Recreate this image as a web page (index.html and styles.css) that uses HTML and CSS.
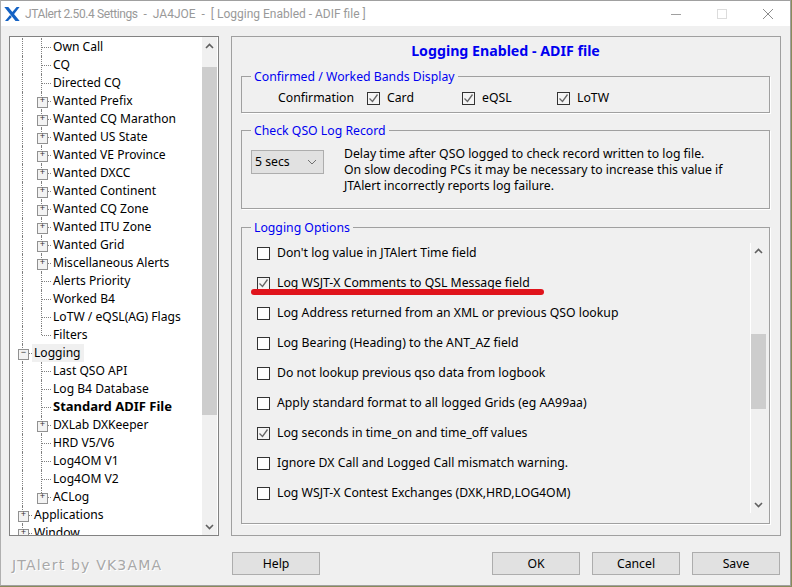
FILE: index.html
```html
<!DOCTYPE html>
<html lang="en">
<head>
<meta charset="utf-8">
<title>JTAlert Settings</title>
<link rel="stylesheet" href="styles.css">
</head>
<body>
<div class="window">
  <header class="titlebar">
    <svg class="logo" width="16" height="16" viewBox="0 0 16 16"><path d="M.3 1h4L15.7 15h-4.2zM15.6 1L9.6 8.8 7.9 6.6 12.6 1zM6 8.9L7.8 11.1 4 15H1z" fill="#1462c4"/></svg>
    <span class="title"><span class="title-app">JTAlert 2.50.4 Settings</span>&nbsp; -&nbsp; JA4JOE&nbsp; -&nbsp; [ Logging Enabled - ADIF file ]</span>
    <div class="winctl">
      <svg width="12" height="12" viewBox="0 0 12 12"><path d="M1 6.5h10" stroke="#a0a0a0"/></svg>
      <svg width="12" height="12" viewBox="0 0 12 12"><rect x="1.5" y="1.5" width="9" height="9" fill="none" stroke="#dcdcdc"/></svg>
      <svg width="12" height="12" viewBox="0 0 12 12"><path d="M1 1l10 10M11 1L1 11" stroke="#8c8c8c" fill="none"/></svg>
    </div>
  </header>
  <main class="content">
    <nav class="tree">
      <div class="tree-list">
        <div class="row"><i class="g"></i><i class="g"></i><i class="stub"></i><span>Own Call</span></div>
        <div class="row"><i class="g"></i><i class="g"></i><i class="stub"></i><span>CQ</span></div>
        <div class="row"><i class="g"></i><i class="g"></i><i class="stub"></i><span>Directed CQ</span></div>
        <div class="row"><i class="g"></i><i class="g plus"></i><i class="stub"></i><span>Wanted Prefix</span></div>
        <div class="row"><i class="g"></i><i class="g plus"></i><i class="stub"></i><span>Wanted CQ Marathon</span></div>
        <div class="row"><i class="g"></i><i class="g plus"></i><i class="stub"></i><span>Wanted US State</span></div>
        <div class="row"><i class="g"></i><i class="g plus"></i><i class="stub"></i><span>Wanted VE Province</span></div>
        <div class="row"><i class="g"></i><i class="g plus"></i><i class="stub"></i><span>Wanted DXCC</span></div>
        <div class="row"><i class="g"></i><i class="g plus"></i><i class="stub"></i><span>Wanted Continent</span></div>
        <div class="row"><i class="g"></i><i class="g plus"></i><i class="stub"></i><span>Wanted CQ Zone</span></div>
        <div class="row"><i class="g"></i><i class="g plus"></i><i class="stub"></i><span>Wanted ITU Zone</span></div>
        <div class="row"><i class="g"></i><i class="g plus"></i><i class="stub"></i><span>Wanted Grid</span></div>
        <div class="row"><i class="g"></i><i class="g plus"></i><i class="stub"></i><span>Miscellaneous Alerts</span></div>
        <div class="row"><i class="g"></i><i class="g"></i><i class="stub"></i><span>Alerts Priority</span></div>
        <div class="row"><i class="g"></i><i class="g"></i><i class="stub"></i><span>Worked B4</span></div>
        <div class="row"><i class="g"></i><i class="g"></i><i class="stub"></i><span>LoTW / eQSL(AG) Flags</span></div>
        <div class="row"><i class="g"></i><i class="g end"></i><i class="stub"></i><span>Filters</span></div>
        <div class="row"><i class="g minus"></i><i class="stub"></i><span class="selected">Logging</span></div>
        <div class="row"><i class="g"></i><i class="g"></i><i class="stub"></i><span>Last QSO API</span></div>
        <div class="row"><i class="g"></i><i class="g"></i><i class="stub"></i><span>Log B4 Database</span></div>
        <div class="row"><i class="g"></i><i class="g"></i><i class="stub"></i><span class="strong">Standard ADIF File</span></div>
        <div class="row"><i class="g"></i><i class="g plus"></i><i class="stub"></i><span>DXLab DXKeeper</span></div>
        <div class="row"><i class="g"></i><i class="g"></i><i class="stub"></i><span>HRD V5/V6</span></div>
        <div class="row"><i class="g"></i><i class="g"></i><i class="stub"></i><span>Log4OM V1</span></div>
        <div class="row"><i class="g"></i><i class="g"></i><i class="stub"></i><span>Log4OM V2</span></div>
        <div class="row"><i class="g"></i><i class="g plus end"></i><i class="stub"></i><span>ACLog</span></div>
        <div class="row"><i class="g plus"></i><i class="stub"></i><span>Applications</span></div>
        <div class="row"><i class="g plus"></i><i class="stub"></i><span>Window</span></div>
      </div>
      <div class="vscroll tree-scroll">
        <svg class="chev" width="9" height="6" viewBox="0 0 9 6"><path d="M1 5l3.5-3.5L8 5" fill="none" stroke="#606060" stroke-width="1.6"/></svg>
        <div class="track"><div class="thumb tree-thumb"></div></div>
        <svg class="chev" width="9" height="6" viewBox="0 0 9 6"><path d="M1 1l3.5 3.5L8 1" fill="none" stroke="#606060" stroke-width="1.6"/></svg>
      </div>
    </nav>
    <section class="panel">
      <h1 class="panel-title">Logging Enabled - ADIF file</h1>

      <fieldset class="group group-bands">
        <legend>Confirmed / Worked Bands Display</legend>
        <div class="bands">
          <span class="bands-label">Confirmation</span>
          <label class="check band-card"><i class="box on"><svg width="11" height="11" viewBox="0 0 11 11"><path d="M1.5 5.5l3 3 5-7" fill="none" stroke="#666" stroke-width="1.3"/></svg></i>Card</label>
          <label class="check band-eqsl"><i class="box on"><svg width="11" height="11" viewBox="0 0 11 11"><path d="M1.5 5.5l3 3 5-7" fill="none" stroke="#666" stroke-width="1.3"/></svg></i>eQSL</label>
          <label class="check"><i class="box on"><svg width="11" height="11" viewBox="0 0 11 11"><path d="M1.5 5.5l3 3 5-7" fill="none" stroke="#666" stroke-width="1.3"/></svg></i>LoTW</label>
        </div>
      </fieldset>

      <fieldset class="group group-check">
        <legend>Check QSO Log Record</legend>
        <div class="delay">
          <div class="combo"><span>5 secs</span><svg width="10" height="6" viewBox="0 0 10 6"><path d="M1 1l4 4 4-4" fill="none" stroke="#707070"/></svg></div>
          <p class="delay-text">Delay time after QSO logged to check record written to log file.<br>On slow decoding PCs it may be necessary to increase this value if<br>JTAlert incorrectly reports log failure.</p>
        </div>
      </fieldset>

      <fieldset class="group group-options">
        <legend>Logging Options</legend>
        <div class="options">
          <div class="option-list">
            <label class="check"><i class="box"></i>Don't log value in JTAlert Time field</label>
            <label class="check"><i class="box on"><svg width="11" height="11" viewBox="0 0 11 11"><path d="M1.5 5.5l3 3 5-7" fill="none" stroke="#666" stroke-width="1.3"/></svg></i>Log WSJT-X Comments to QSL Message field</label>
            <label class="check"><i class="box"></i>Log Address returned from an XML or previous QSO lookup</label>
            <label class="check"><i class="box"></i>Log Bearing (Heading) to the ANT_AZ field</label>
            <label class="check"><i class="box"></i>Do not lookup previous qso data from logbook</label>
            <label class="check"><i class="box"></i>Apply standard format to all logged Grids (eg AA99aa)</label>
            <label class="check"><i class="box on"><svg width="11" height="11" viewBox="0 0 11 11"><path d="M1.5 5.5l3 3 5-7" fill="none" stroke="#666" stroke-width="1.3"/></svg></i>Log seconds in time_on and time_off values</label>
            <label class="check"><i class="box"></i>Ignore DX Call and Logged Call mismatch warning.</label>
            <label class="check"><i class="box"></i>Log WSJT-X Contest Exchanges (DXK,HRD,LOG4OM)</label>
          </div>
          <div class="vscroll opt-scroll">
            <svg class="chev" width="9" height="6" viewBox="0 0 9 6"><path d="M1 5l3.5-3.5L8 5" fill="none" stroke="#606060" stroke-width="1.6"/></svg>
            <div class="track"><div class="thumb opt-thumb"></div></div>
            <svg class="chev" width="9" height="6" viewBox="0 0 9 6"><path d="M1 1l3.5 3.5L8 1" fill="none" stroke="#606060" stroke-width="1.6"/></svg>
          </div>
        </div>
        <div class="underline"></div>
      </fieldset>
    </section>
  </main>
  <footer class="footer">
    <span class="credit">JTAlert by VK3AMA</span>
    <button class="btn btn-help">Help</button>
    <span class="spacer"></span>
    <button class="btn">OK</button>
    <button class="btn">Cancel</button>
    <button class="btn btn-save">Save</button>
  </footer>
</div>
</body>
</html>
```
FILE: styles.css
```css
* { box-sizing: border-box; }
html, body { margin: 0; height: 100%; }
body { background: #8a8a5a; overflow: hidden; }
.window {
  width: 791px; height: 586px;
  background: #f0f0f0;
  border: 1px solid #a0a0a0;
  border-left-color: #b0b0b0;
  display: flex; flex-direction: column;
  font: 12.25px/16px "Noto Sans", sans-serif;
  color: #000;
}
.titlebar {
  height: 25px; background: #fff;
  display: flex; align-items: center;
  padding-left: 3px;
  flex: none;
}
.logo { flex: none; margin-top: 1px; }
.title { margin-left: 5px; color: #999; font: 12px/16px Roboto, sans-serif; white-space: nowrap; }
.title-app { letter-spacing: -.4px; }
.winctl { margin-left: auto; display: flex; gap: 34px; padding-right: 16px; }
.content {
  height: 500px; flex: none;
  margin-top: 10px;
  padding: 0 9px 0 8px;
  display: flex; gap: 12px;
}
.tree {
  width: 210px; flex: none;
  background: #fff;
  border: 1px solid #828282;
  display: flex; overflow: hidden;
  position: relative;
}
.tree-list { flex: 1; min-width: 0; overflow: hidden; padding-top: 1px; font-size: 12.1px; }
.row { height: 18px; display: flex; align-items: center; white-space: nowrap; }
.row span { padding: 0 2px; }
.g {
  width: 19px; height: 18px; flex: none; display: block; position: relative; z-index: 1;
}
.g::before {
  content: ""; position: absolute; left: 12px; top: 0; bottom: 0;
  border-left: 1px dotted #808080;
}
.g.end::before { bottom: 9px; }
.plus::after, .minus::after {
  content: "+"; position: absolute; left: 8px; top: 5px;
  width: 9px; height: 9px;
  background: #f3f3f3; border: 1px solid #919191;
  font: 9px/7px "Liberation Mono", monospace; color: #333; text-align: center;
}
.minus::after { content: "\2212"; }
.stub {
  width: 9px; height: 0; flex: none; margin-left: -6px;
  border-top: 1px dotted #808080;
}
.row .selected { background: #f0f0f0; line-height: 18px; padding-right: 3px; }
.row .strong { font-weight: 700; font-size: 13px; margin-bottom: 2px; }
.vscroll { display: flex; flex-direction: column; align-items: center; flex: none; width: 15px; }
.tree-scroll { height: 100%; margin-right: 1px; background: #f0f0f0; }
.chev { flex: none; margin: 5px 0; }
.tree-scroll .chev:first-child { margin: 6px 0 4px; }
.track { flex: 1; width: 100%; position: relative; display: flex; flex-direction: column; }
.thumb { background: #cdcdcd; width: 100%; }
.tree-thumb { height: 348px; margin-top: 14px; }
.panel {
  width: 550px; flex: none;
  border: 1px solid #a0a0a0;
  padding: 0 10px 0 9px;
  display: flex; flex-direction: column;
}
.panel-title {
  margin: 6px 0 0; font: 700 14.2px/16px "Noto Sans", sans-serif; color: #0000f0; text-align: center; height: 16px;
  flex: none;
}
.group {
  margin: 0; padding: 0; min-width: 0;
  border: 1px solid #a0a0a0;
  box-shadow: 1px 1px 0 #fff;
  flex: none;
}
.group legend { margin-left: 9px; padding: 2px 3px 0; color: #0000f0; font-size: 12.25px; line-height: 16px; }
.group-bands { margin-top: 8px; height: 46px; }
.group-check { margin-top: 8px; height: 88px; }
.group-options { margin-top: 9px; height: 306px; position: relative; }
.bands { display: flex; align-items: center; height: 24px; margin-top: 1px; padding-left: 36px; }
.bands-label { width: 89px; }
.band-card { width: 95px; }
.band-eqsl { width: 95px; }
.check { display: flex; align-items: center; gap: 7px; white-space: nowrap; }
.box {
  width: 13px; height: 13px; flex: none; display: flex; align-items: center; justify-content: center;
  border: 1px solid #333; background: #fff;
}
.box.on { background: #f4f4f4; }
.delay { display: flex; padding: 11px 0 0 9px; }
.combo {
  width: 73px; height: 24px; background: #e1e1e1; border: 1px solid #adadad;
  display: flex; align-items: center; justify-content: space-between; padding: 0 6px 0 3px;
  flex: none;
}
.delay-text { margin: -4px 0 0 20px; white-space: nowrap; }
.options { display: flex; height: 270px; margin-top: 7px; }
.option-list { flex: 1; display: flex; flex-direction: column; margin-top: -5px; padding-left: 15px; }
.option-list .check { height: 30px; flex: none; }
.opt-scroll { margin-right: 3px; width: 16px; background: #f0f0f0; border-left: 1px solid #fff; }
.opt-thumb { height: 75px; margin-top: 75px; }
.underline {
  position: absolute; left: 9px; top: 53px;
  width: 293px; height: 6px; border-radius: 3px; background: #e0141c;
}
.footer {
  flex: 1; display: flex; align-items: flex-start; gap: 12px;
  padding: 16px 10px 0 11px; position: relative;
}
.credit {
  position: absolute; left: 11px; top: 21px;
  font: 14px/16px "DejaVu Sans", sans-serif; letter-spacing: 1.2px; color: #a8a8a8; text-shadow: 1px 1px 0 #fff;
}
.btn {
  width: 88px; height: 23px; margin: 0; padding: 0;
  background: #e1e1e1; border: 1px solid #adadad; font: inherit; color: #000;
}
.btn-help { margin-left: 220px; }
.spacer { flex: 1; }
```
